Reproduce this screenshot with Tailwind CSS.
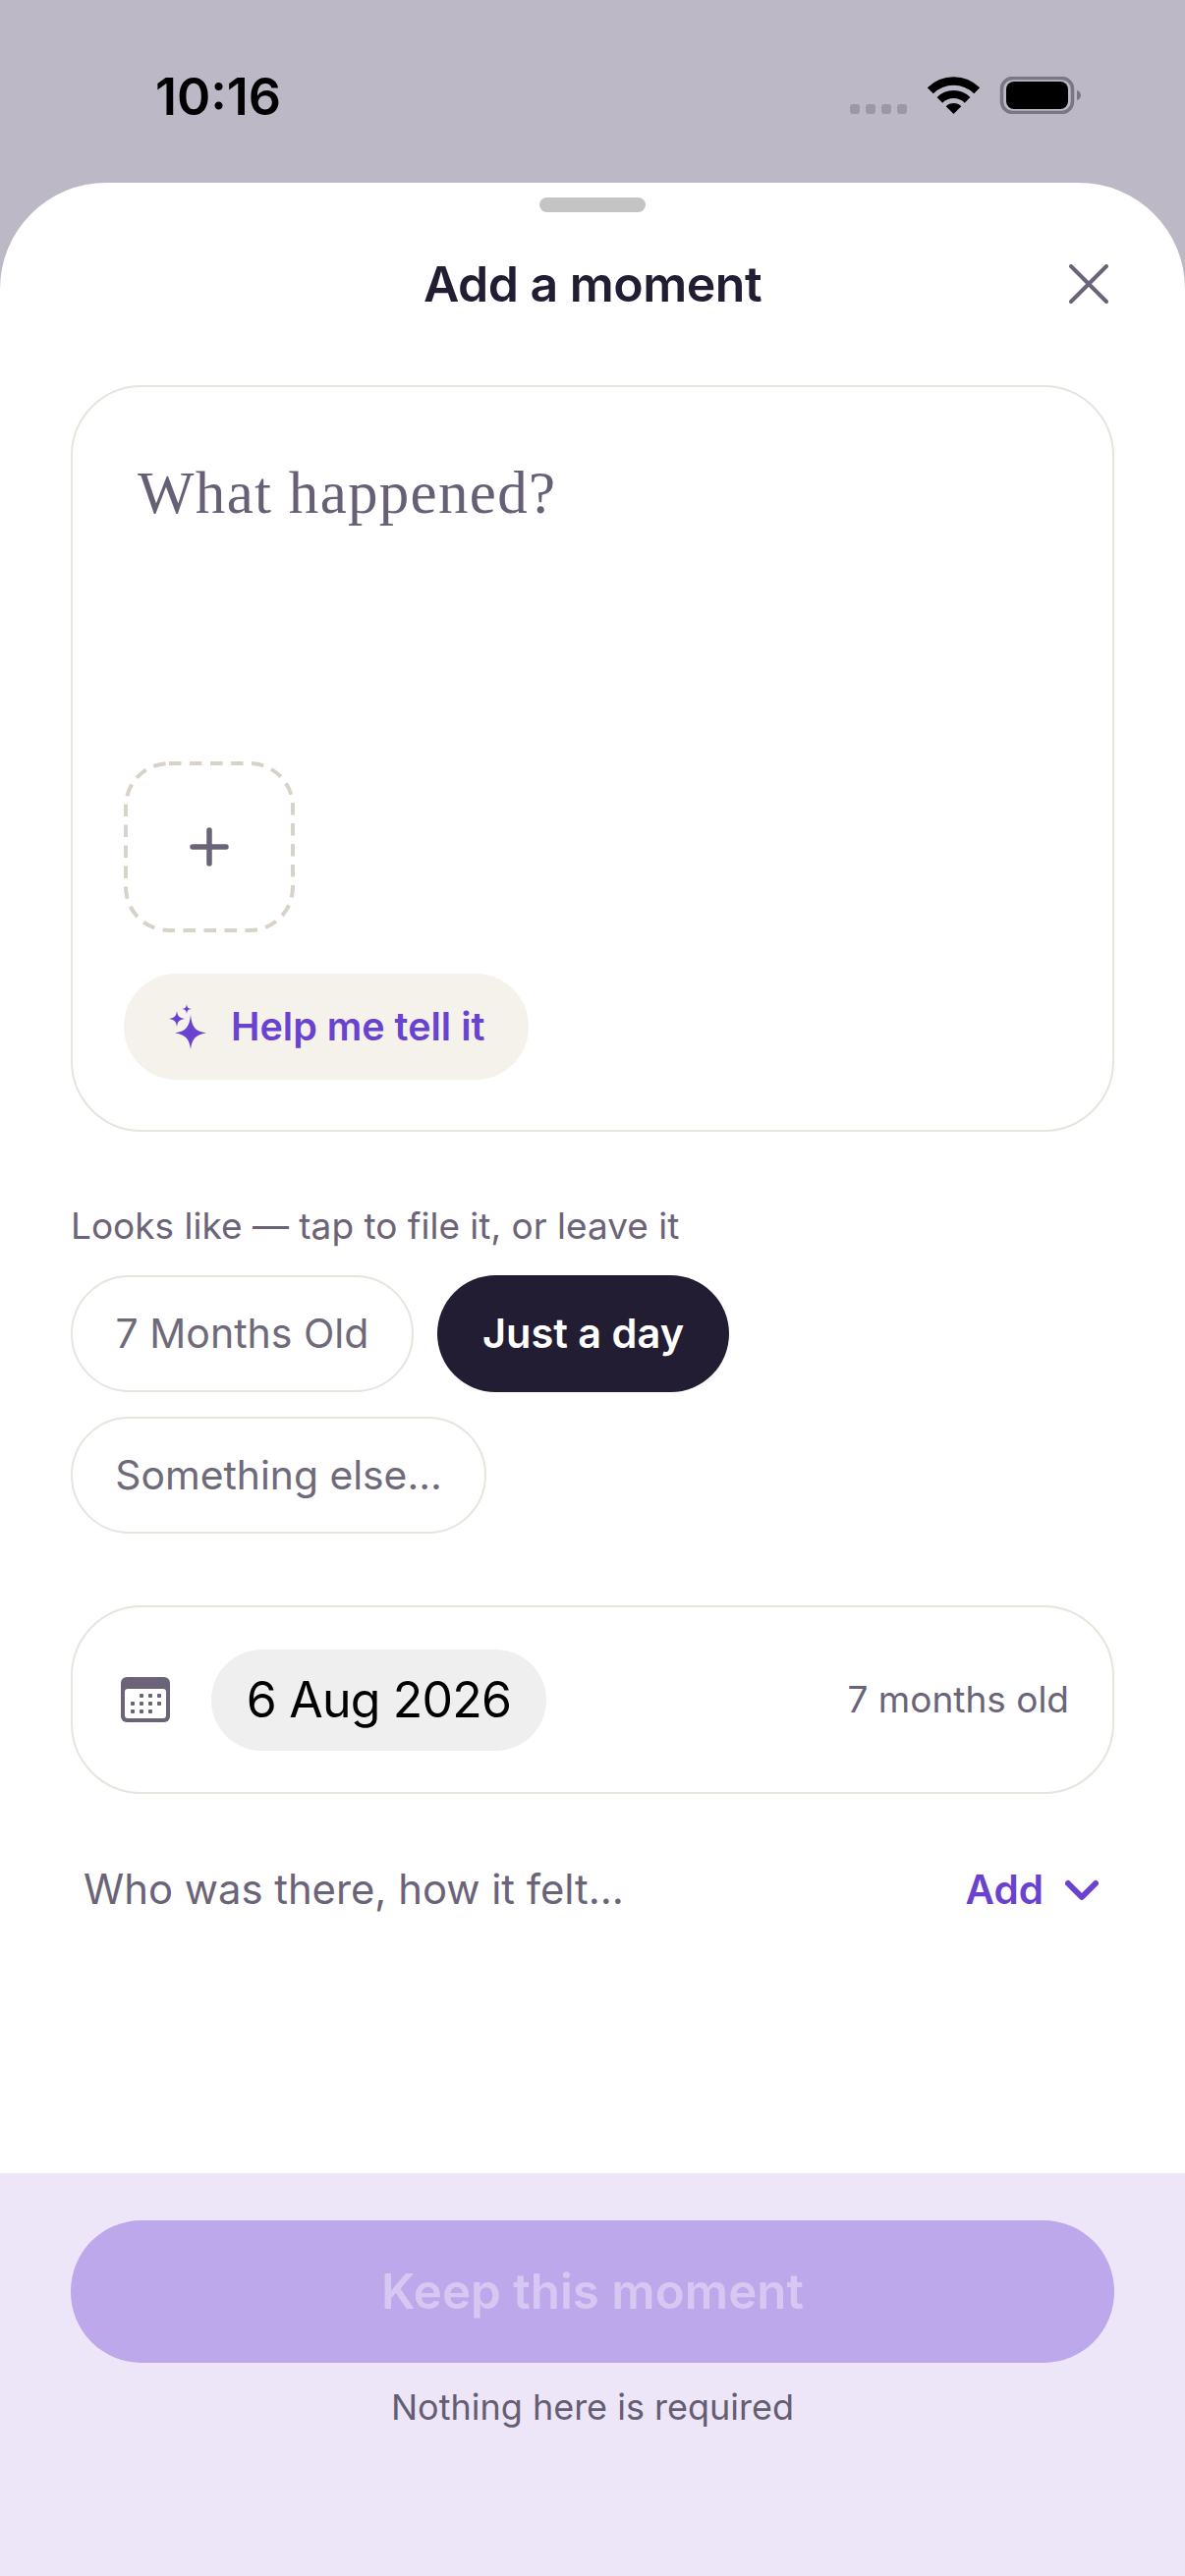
<!DOCTYPE html>
<html lang="en">
<head>
  <meta charset="UTF-8">
  <title>Add a moment</title>
  <script src="https://cdn.jsdelivr.net/npm/@tailwindcss/browser@4"></script>
</head>
<body class="w-[1206px] h-[2622px] overflow-hidden bg-[#bcb8c6] font-[Inter,sans-serif] text-[#6b6478]">
  <div class="flex flex-col h-full">
    <!-- status bar -->
    <div class="h-[186px] shrink-0 flex justify-between items-start pt-[78px] pl-[158px] pr-[106px]">
      <span class="text-[52px] leading-[42px] font-semibold text-black">10:16</span>
      <svg width="235" height="38" viewBox="0 0 235 38">
        <g fill="#9c98a4">
          <rect x="0" y="28" width="10" height="10" rx="3"/>
          <rect x="16" y="28" width="10" height="10" rx="3"/>
          <rect x="32" y="28" width="10" height="10" rx="3"/>
          <rect x="48" y="28" width="10" height="10" rx="3"/>
        </g>
        <g transform="translate(80 0)">
          <path d="M1.8 14.3A33.5 33.5 0 0 1 49.2 14.3" fill="none" stroke="#000" stroke-width="8.5"/>
          <path d="M11.4 23.9A20 20 0 0 1 39.6 23.9" fill="none" stroke="#000" stroke-width="8"/>
          <path d="M25.5 38L17.7 30.2A11 11 0 0 1 33.3 30.2Z" fill="#000"/>
        </g>
        <rect x="154.5" y="1.5" width="72" height="35" rx="11" fill="none" stroke="#7a7684" stroke-width="3.5"/>
        <rect x="159" y="5" width="63" height="28" rx="8" fill="#000"/>
        <path d="M231 14c2.500 .8 4 2.800 4 5s-1.500 4.200-4 5Z" fill="#7a7684"/>
      </svg>
    </div>

    <!-- sheet -->
    <div class="flex-1 flex flex-col bg-white rounded-t-[108px]">
      <div class="w-[108px] h-[15px] mt-[15px] mx-auto rounded-full bg-[#c4c4c4]"></div>
      <div class="h-[146px] grid grid-cols-[1fr_auto_1fr] items-center px-[78px]">
        <span></span>
        <h1 class="text-[50px] font-semibold text-[#231d33] tracking-[-0.5px]">Add a moment</h1>
        <svg class="justify-self-end" width="40" height="40" viewBox="0 0 40 40" fill="none" stroke="#6b6478" stroke-width="4" stroke-linecap="round">
          <path d="M2 2L38 38M38 2L2 38"/>
        </svg>
      </div>

      <div class="mt-[30px] mx-[72px] h-[760px] flex flex-col justify-end border-2 border-[#e8e4de] rounded-[72px] pl-[52px] pb-[51px]">
        <div class="flex-1 pl-[14px] pt-[78px] font-['Liberation_Serif',serif] text-[61px] leading-[60px] tracking-[1.300px] text-[#665f75]">What happened?</div>
        <div class="w-[174px] h-[174px] flex items-center justify-center relative">
          <svg class="absolute inset-0" width="174" height="174" viewBox="0 0 174 174" fill="none">
            <rect x="2" y="2" width="170" height="170" rx="44" stroke="#d8d2c8" stroke-width="4" stroke-dasharray="12.500 8.500"/>
          </svg>
          <svg width="40" height="40" viewBox="0 0 40 40" fill="none" stroke="#6b6478" stroke-width="5.500" stroke-linecap="round">
            <path d="M20 3V37M3 20H37"/>
          </svg>
        </div>
        <div class="mt-[42px] w-[412px] h-[108px] flex items-center gap-[27px] pl-[46px] rounded-full bg-[#f5f2ec]">
          <svg width="38" height="46" viewBox="0 0 38 46" fill="#6a42d0">
            <path d="M22 11C23.500 23 26 27.500 38 29.500C26 31.500 23.500 36 22 46C20.500 36 18 31.500 6 29.500C18 27.500 20.500 23 22 11Z"/>
            <path d="M8 7C8.800 12 10 14 16 15C10 16 8.800 18 8 23C7.200 18 6 16 0 15C6 14 7.200 12 8 7Z"/>
            <path d="M18 0C18.400 3 19 4.500 23 5C19 5.500 18.400 7 18 10C17.600 7 17 5.500 13 5C17 4.500 17.600 3 18 0Z"/>
          </svg>
          <span class="mt-[2px] -ml-[2px] text-[39.500px] font-semibold text-[#6a42d0]">Help me tell it</span>
        </div>
      </div>

      <p class="mt-[71px] ml-[72px] text-[37px] leading-[50px]">Looks like — tap to file it, or leave it</p>
      <div class="mt-[25px] mx-[72px] flex flex-wrap gap-x-[24px] gap-y-[25px]">
        <span class="h-[119px] w-[349px] flex items-center justify-center rounded-[60px] border-2 border-[#e8e4de] text-[41px] text-[#6f6a7a]">7 Months Old</span>
        <span class="h-[119px] w-[297px] flex items-center justify-center rounded-[60px] bg-[#231d33] text-white text-[41.500px] font-semibold">Just a day</span>
        <span class="h-[119px] w-[423px] flex items-center justify-center rounded-[60px] border-2 border-[#e8e4de] text-[40.800px] text-[#6f6a7a]">Something else...</span>
      </div>

      <div class="mt-[73px] mx-[72px] h-[192px] flex items-center border-2 border-[#e8e4de] rounded-[72px] pl-[49px] pr-[44px]">
        <svg width="50" height="46" viewBox="0 0 50 46">
          <rect width="50" height="46" rx="6" fill="#6b6478"/>
          <rect x="4" y="12" width="42" height="30" rx="3" fill="#fff"/>
          <g fill="#6b6478">
            <rect x="19" y="17" width="4" height="4" rx="1"/><rect x="28" y="17" width="4" height="4" rx="1"/><rect x="37" y="17" width="4" height="4" rx="1"/>
            <rect x="10" y="25" width="4" height="4" rx="1"/><rect x="19" y="25" width="4" height="4" rx="1"/><rect x="28" y="25" width="4" height="4" rx="1"/><rect x="37" y="25" width="4" height="4" rx="1"/>
            <rect x="10" y="33" width="4" height="4" rx="1"/><rect x="19" y="33" width="4" height="4" rx="1"/><rect x="28" y="33" width="4" height="4" rx="1"/>
          </g>
        </svg>
        <span class="ml-[42px] w-[341px] h-[103px] flex items-center justify-center rounded-[52px] bg-[#efefef] text-[50px] tracking-[-0.8px] text-black">6 Aug 2026</span>
        <span class="ml-auto text-[37px]">7 months old</span>
      </div>

      <div class="mt-[68px] h-[60px] flex items-center pl-[85px] pr-[88px]">
        <span class="-mt-[2px] text-[41.800px]">Who was there, how it felt...</span>
        <span class="ml-auto text-[40.500px] font-semibold text-[#6a42d0]">Add</span>
        <svg class="ml-[22px]" width="34" height="22" viewBox="0 0 34 22" fill="none" stroke="#6a42d0" stroke-width="6" stroke-linecap="round" stroke-linejoin="round">
          <path d="M3 4L17 18L31 4"/>
        </svg>
      </div>
    </div>

    <!-- footer -->
    <div class="h-[410px] shrink-0 bg-[#ede6f9] px-[72px] pt-[48px]">
      <div class="h-[145px] flex items-center justify-center rounded-[72px] bg-[#bca8ea] text-[#d5c8f2] text-[49.300px] font-semibold">Keep this moment</div>
      <p class="mt-[20px] text-center text-[36px] leading-[50px] text-[#655d72]">Nothing here is required</p>
    </div>
  </div>
</body>
</html>
